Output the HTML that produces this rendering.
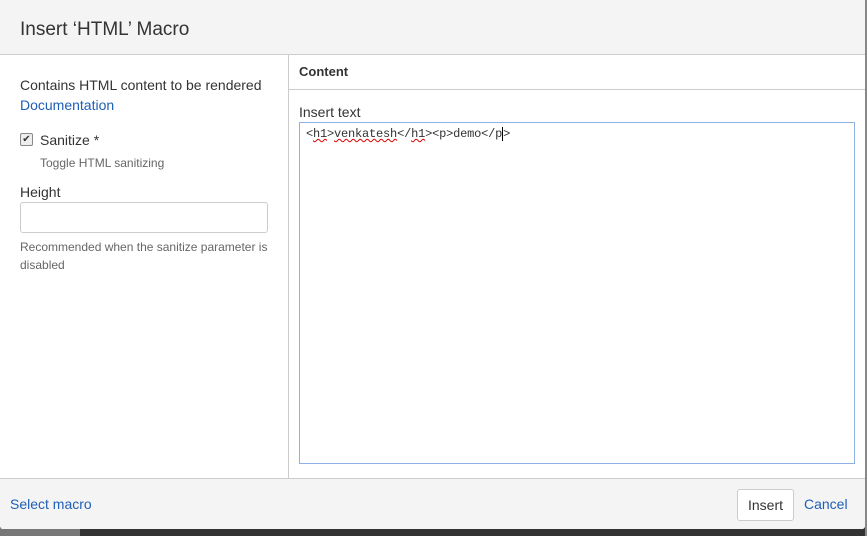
<!DOCTYPE html>
<html><head><style>
body{margin:0;width:867px;height:536px;overflow:hidden;background:#333;font-family:"Liberation Sans",sans-serif;position:relative}
.bl{position:absolute;left:0;top:528px;width:80px;height:8px;background:#777}
.rt{position:absolute;left:865px;top:0;width:2px;height:536px;background:#888}
.dlg{position:absolute;left:0;top:0;width:865px;height:529px;background:#fff;border-radius:0 0 3px 3px;overflow:hidden}
.hd{position:absolute;left:0;top:0;width:865px;height:54px;background:#f4f4f4;border-bottom:1px solid #ccc}
.hd span{position:absolute;left:20px;top:19px;font-size:19px;color:#333}
.lp{position:absolute;left:0;top:55px;width:288px;height:423px;border-right:1px solid #ccc}
.t{position:absolute;white-space:nowrap}
.ch{position:absolute;left:299px;font-size:13px;font-weight:bold;color:#333;top:64px}
.hl{position:absolute;left:289px;top:89px;width:576px;height:1px;background:#ccc}
.ta{position:absolute;left:299px;top:122px;width:554px;height:340px;border:1px solid #8fb0e6;box-sizing:content-box}
.ft{position:absolute;left:0;top:478px;width:865px;height:51px;background:#f4f4f4;border-top:1px solid #ccc}
.btn{position:absolute;left:737px;top:10px;width:55px;height:30px;border:1px solid #ccc;border-radius:3px;background:#fff;font-size:14px;color:#333;text-align:center;line-height:30px}
.sq{text-decoration:underline wavy #d00;text-decoration-thickness:1px}
</style></head><body>
<div class="bl"></div><div class="rt"></div>
<div class="dlg">
<div class="hd"><span>Insert ‘HTML’ Macro</span></div>
<div class="lp">
<div class="t" style="left:20px;top:22px;font-size:14px;color:#333">Contains HTML content to be rendered</div>
<div class="t" style="left:20px;top:42px;font-size:14px;color:#1f5fb5">Documentation</div>
<div class="t" style="left:20px;top:78px;width:11px;height:11px;border:1px solid #888;border-radius:2px;background:#eee;font-size:10px;line-height:11px;text-align:center;color:#333">✔</div>
<div class="t" style="left:40px;top:77px;font-size:14px;color:#333">Sanitize *</div>
<div class="t" style="left:40px;top:101px;font-size:12px;color:#666">Toggle HTML sanitizing</div>
<div class="t" style="left:20px;top:129px;font-size:14px;color:#333">Height</div>
<div class="t" style="left:20px;top:147px;width:246px;height:29px;border:1px solid #ccc;border-radius:3px;background:#fff"></div>
<div class="t" style="left:20px;top:183px;font-size:12px;color:#666;line-height:18px">Recommended when the sanitize parameter is<br>disabled</div>
</div>
<div class="ch">Content</div>
<div class="hl"></div>
<div class="t" style="left:299px;top:104px;font-size:14px;color:#333">Insert text</div>
<div class="ta"><div class="t" style="left:6px;top:4px;font-family:'Liberation Mono',monospace;font-size:12px;letter-spacing:-0.2px;color:#333">&lt;<span class="sq">h1</span>&gt;<span class="sq">venkatesh</span>&lt;/<span class="sq">h1</span>&gt;&lt;p&gt;demo&lt;/p<span style="border-left:1px solid #000"></span>&gt;</div></div>
<div class="ft">
<div class="t" style="left:10px;top:17px;font-size:14px;color:#1f5fb5">Select macro</div>
<div class="btn">Insert</div>
<div class="t" style="left:804px;top:17px;font-size:14px;color:#1f5fb5">Cancel</div>
</div>
</div>
</body></html>
